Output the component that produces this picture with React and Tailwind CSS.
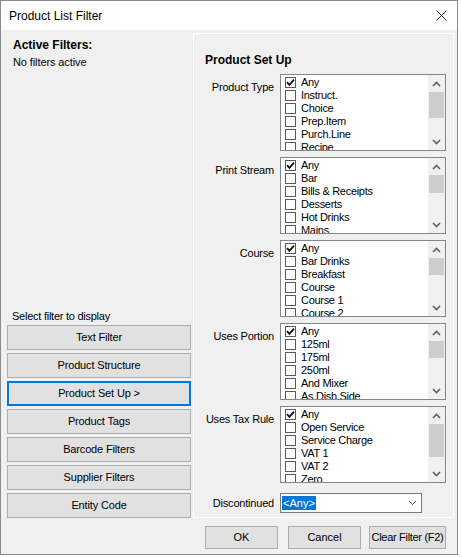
import React from "react";

const LISTS = [
  { label: "Product Type", items: ["Any", "Instruct.", "Choice", "Prep.Item", "Purch.Line", "Recipe"], thumb: 26 },
  { label: "Print Stream", items: ["Any", "Bar", "Bills & Receipts", "Desserts", "Hot Drinks", "Mains"], thumb: 18 },
  { label: "Course", items: ["Any", "Bar Drinks", "Breakfast", "Course", "Course 1", "Course 2"], thumb: 17 },
  { label: "Uses Portion", items: ["Any", "125ml", "175ml", "250ml", "And Mixer", "As Dish Side"], thumb: 17 },
  { label: "Uses Tax Rule", items: ["Any", "Open Service", "Service Charge", "VAT 1", "VAT 2", "Zero"], thumb: 33 },
];

const FILTERS = [
  "Text Filter",
  "Product Structure",
  "Product Set Up >",
  "Product Tags",
  "Barcode Filters",
  "Supplier Filters",
  "Entity Code",
];

function Chevron({ up }) {
  return (
    <svg width="9" height="6" viewBox="0 0 9 6">
      <polyline
        points={up ? "1,5 4.5,1.5 8,5" : "1,1 4.5,4.5 8,1"}
        fill="none"
        stroke="#606060"
        strokeWidth="1.6"
      />
    </svg>
  );
}

function CheckBox({ checked }) {
  return (
    <span className="w-[11px] h-[11px] border border-[#5a5a5a] bg-white flex items-center justify-center shrink-0">
      {checked && (
        <svg width="9" height="9" viewBox="0 0 9 9">
          <polyline points="1,4.2 3.4,6.8 8,1.6" fill="none" stroke="#111" strokeWidth="1.8" />
        </svg>
      )}
    </span>
  );
}

function CheckList({ items, thumb }) {
  return (
    <div className="w-[166px] h-[77px] border border-[#828790] bg-white flex overflow-hidden">
      <div className="flex-1 pt-[1px] pl-[4px] overflow-hidden">
        {items.map((it, i) => (
          <div key={it} className="h-[13px] flex items-center gap-[5px] text-[11px] leading-[13px] tracking-[-0.3px] text-black whitespace-nowrap">
            <CheckBox checked={i === 0} />
            <span>{it}</span>
          </div>
        ))}
      </div>
      <div className="w-[17px] bg-[#f0f0f0] flex flex-col">
        <div className="h-[17px] flex items-center justify-center">
          <Chevron up />
        </div>
        <div className="mx-[1px] bg-[#cdcdcd]" style={{ height: thumb }} />
        <div className="flex-1" />
        <div className="h-[17px] flex items-center justify-center">
          <Chevron />
        </div>
      </div>
    </div>
  );
}

export default function App() {
  return (
    <div className="w-[462px] h-[557px] bg-white font-['Liberation_Sans',Arial,sans-serif] text-black">
      <div className="w-[458px] h-[555px] border border-[#8a8a8a] bg-[#f0f0f0] flex flex-col">
        {/* title bar */}
        <div className="h-[29px] bg-white flex items-center justify-between pl-[8px] pr-[10px] shrink-0">
          <span className="text-[12px]">Product List Filter</span>
          <svg width="11" height="11" viewBox="0 0 11 11">
            <path d="M0.5 0.5 L10.5 10.5 M10.5 0.5 L0.5 10.5" stroke="#222" strokeWidth="1" />
          </svg>
        </div>

        <div className="flex items-start">
          {/* left column */}
          <div className="w-[192px] h-[488px] flex flex-col pl-[6px] pr-[2px]">
            <div className="pl-[6px] pt-[8px]">
              <div className="text-[12px] font-bold leading-[14px]">Active Filters:</div>
              <div className="text-[11px] leading-[14px] mt-[3px] tracking-[-0.1px]">No filters active</div>
            </div>
            <div className="mt-auto pl-[5px] text-[11px] leading-[14px] mb-[2px] tracking-[-0.25px]">Select filter to display</div>
            <div className="flex flex-col gap-[3px]">
              {FILTERS.map((f) => (
                <div
                  key={f}
                  className={
                    f === "Product Set Up >"
                      ? "h-[25px] border-2 border-[#0078d7] bg-[#e1e1e1] flex items-center justify-center text-[11px] tracking-[-0.15px]"
                      : "h-[25px] border border-[#adadad] bg-[#e1e1e1] flex items-center justify-center text-[11px] tracking-[-0.15px]"
                  }
                >
                  {f}
                </div>
              ))}
            </div>
          </div>

          {/* right panel */}
          <div className="mt-[3px] w-[261px] h-[485px] border border-white">
            <div className="pl-[11px] pt-[18px] text-[12px] font-bold leading-[16px]">Product Set Up</div>
            <div className="mt-[6px] flex flex-col gap-[6px]">
              {LISTS.map((l) => (
                <div key={l.label} className="flex">
                  <div className="w-[86px] pr-[6px] pt-[6px] text-right text-[11px] leading-[14px] tracking-[-0.2px] whitespace-nowrap">
                    {l.label}
                  </div>
                  <CheckList items={l.items} thumb={l.thumb} />
                </div>
              ))}
              <div className="flex items-center mt-[4px]">
                <div className="w-[86px] pr-[6px] text-right text-[11px] leading-[14px] tracking-[-0.2px]">Discontinued</div>
                <div className="w-[142px] h-[20px] border border-[#7a7a7a] bg-white flex items-center pl-[1px] pr-[4px]">
                  <span className="h-[14px] px-[1px] bg-[#0078d7] text-white text-[11px] leading-[14px]">&lt;Any&gt;</span>
                  <span className="ml-auto">
                    <svg width="9" height="6" viewBox="0 0 9 6">
                      <polyline points="1,1 4.5,4.5 8,1" fill="none" stroke="#555" strokeWidth="1" />
                    </svg>
                  </span>
                </div>
              </div>
            </div>
          </div>
        </div>

        {/* bottom buttons */}
        <div className="flex pl-[204px] pt-[8px] gap-[10px]">
          <div className="w-[73px] h-[23px] border border-[#adadad] bg-[#e1e1e1] flex items-center justify-center text-[11px]">OK</div>
          <div className="w-[73px] h-[23px] border border-[#adadad] bg-[#e1e1e1] flex items-center justify-center text-[11px]">Cancel</div>
          <div className="w-[77px] h-[23px] border border-[#adadad] bg-[#e1e1e1] flex items-center justify-center text-[11px] tracking-[-0.3px] -ml-[2px] whitespace-nowrap">Clear Filter (F2)</div>
        </div>
      </div>
    </div>
  );
}
